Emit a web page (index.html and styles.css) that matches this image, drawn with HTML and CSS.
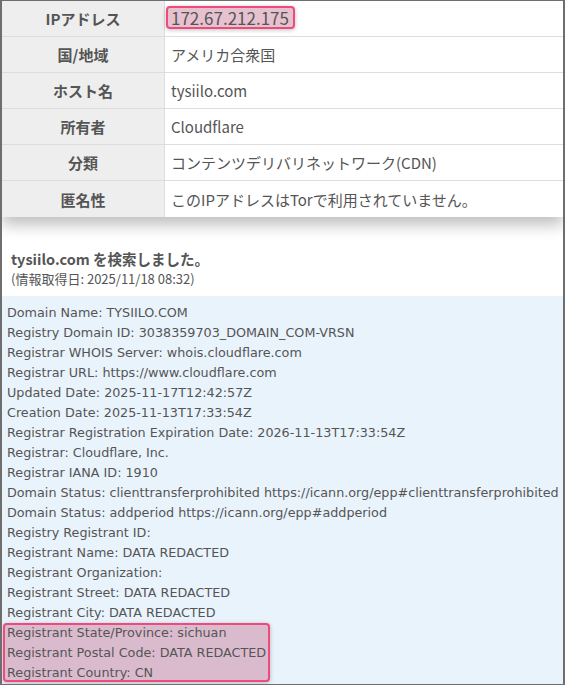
FILE: index.html
```html
<!DOCTYPE html>
<html lang="ja">
<head>
<meta charset="utf-8">
<link rel="stylesheet" href="styles.css">
</head>
<body>
<div class="frame">
  <table class="info">
    <tr><th>IPアドレス</th><td><span class="mark ip">172.67.212.175</span></td></tr>
    <tr><th>国/地域</th><td>アメリカ合衆国</td></tr>
    <tr><th>ホスト名</th><td>tysiilo.com</td></tr>
    <tr><th>所有者</th><td>Cloudflare</td></tr>
    <tr><th>分類</th><td>コンテンツデリバリネットワーク(CDN)</td></tr>
    <tr><th>匿名性</th><td>このIPアドレスはTorで利用されていません。</td></tr>
  </table>
  <div class="result">
    <div class="title">tysiilo.com を検索しました。</div>
    <div class="date">(情報取得日: 2025/11/18 08:32)</div>
  </div>
  <div class="whois">
    <div>Domain Name: TYSIILO.COM</div>
    <div>Registry Domain ID: 3038359703_DOMAIN_COM-VRSN</div>
    <div>Registrar WHOIS Server: whois.cloudflare.com</div>
    <div>Registrar URL: https://www.cloudflare.com</div>
    <div>Updated Date: 2025-11-17T12:42:57Z</div>
    <div>Creation Date: 2025-11-13T17:33:54Z</div>
    <div>Registrar Registration Expiration Date: 2026-11-13T17:33:54Z</div>
    <div>Registrar: Cloudflare, Inc.</div>
    <div>Registrar IANA ID: 1910</div>
    <div>Domain Status: clienttransferprohibited https://icann.org/epp#clienttransferprohibited</div>
    <div>Domain Status: addperiod https://icann.org/epp#addperiod</div>
    <div>Registry Registrant ID:</div>
    <div>Registrant Name: DATA REDACTED</div>
    <div>Registrant Organization:</div>
    <div>Registrant Street: DATA REDACTED</div>
    <div>Registrant City: DATA REDACTED</div>
    <div class="block">
      <div>Registrant State/Province: sichuan</div>
      <div>Registrant Postal Code: DATA REDACTED</div>
      <div>Registrant Country: CN</div>
    </div>
  </div>
</div>
</body>
</html>
```
FILE: styles.css
```css
html, body { margin: 0; padding: 0; }
body {
  font-family: "DejaVu Sans", "Noto Sans CJK JP", sans-serif;
  color: #555;
  background: #fff;
}
.frame {
  width: 565px;
  height: 685px;
  box-sizing: border-box;
  border: 2px solid #6e6e6e;
  border-top-width: 1px;
  border-bottom-width: 1px;
  overflow: hidden;
  background: #fff;
}
.info {
  width: 100%;
  border-collapse: collapse;
  box-shadow: 0 8px 14px rgba(0,0,0,0.25);
  font-size: 15px;
  font-family: "Noto Sans CJK JP", sans-serif;
}
.info th, .info td {
  height: 35px;
  padding: 0 6px;
  border-bottom: 1px solid #ddd;
  vertical-align: middle;
}
.info tr:last-child th, .info tr:last-child td { border-bottom: none; height: 36px; }
.info th {
  width: 150px;
  background: #eee;
  font-weight: bold;
  text-align: center;
  border-right: 1px solid #ddd;
}
.mark {
  background: rgba(200, 120, 150, 0.45);
  border: 2px solid #f04a7c;
  border-radius: 4px;
  box-shadow: 0 1px 4px rgba(0,0,0,0.25);
}
.mark.ip {
  display: inline-block;
  font-size: 17px;
  line-height: 19px;
  padding: 0 4px 0 3px;
  margin-left: -5px;
  margin-top: -5px;
}
.result {
  padding: 31px 0 8px 9px;
}
.title {
  font-weight: bold;
  font-size: 14.5px;
  line-height: 22px;
  font-family: "Noto Sans CJK JP", sans-serif;
}
.date {
  font-family: "Noto Sans CJK JP", sans-serif;
  font-size: 13px;
  line-height: 18px;
}
.whois {
  background: #e9f3fc;
  padding: 7px 0 10px 5px;
  font-size: 12.75px;
  line-height: 20px;
  white-space: nowrap;
}
.block {
  width: fit-content;
  height: 59px;
  margin-left: -4px;
  padding: 0 4px 0 4px;
  border-radius: 4px;
  background: rgba(200, 120, 150, 0.45);
  box-shadow: inset 0 0 0 2px #f04a7c, 0 1px 4px rgba(0,0,0,0.25);
}
```
